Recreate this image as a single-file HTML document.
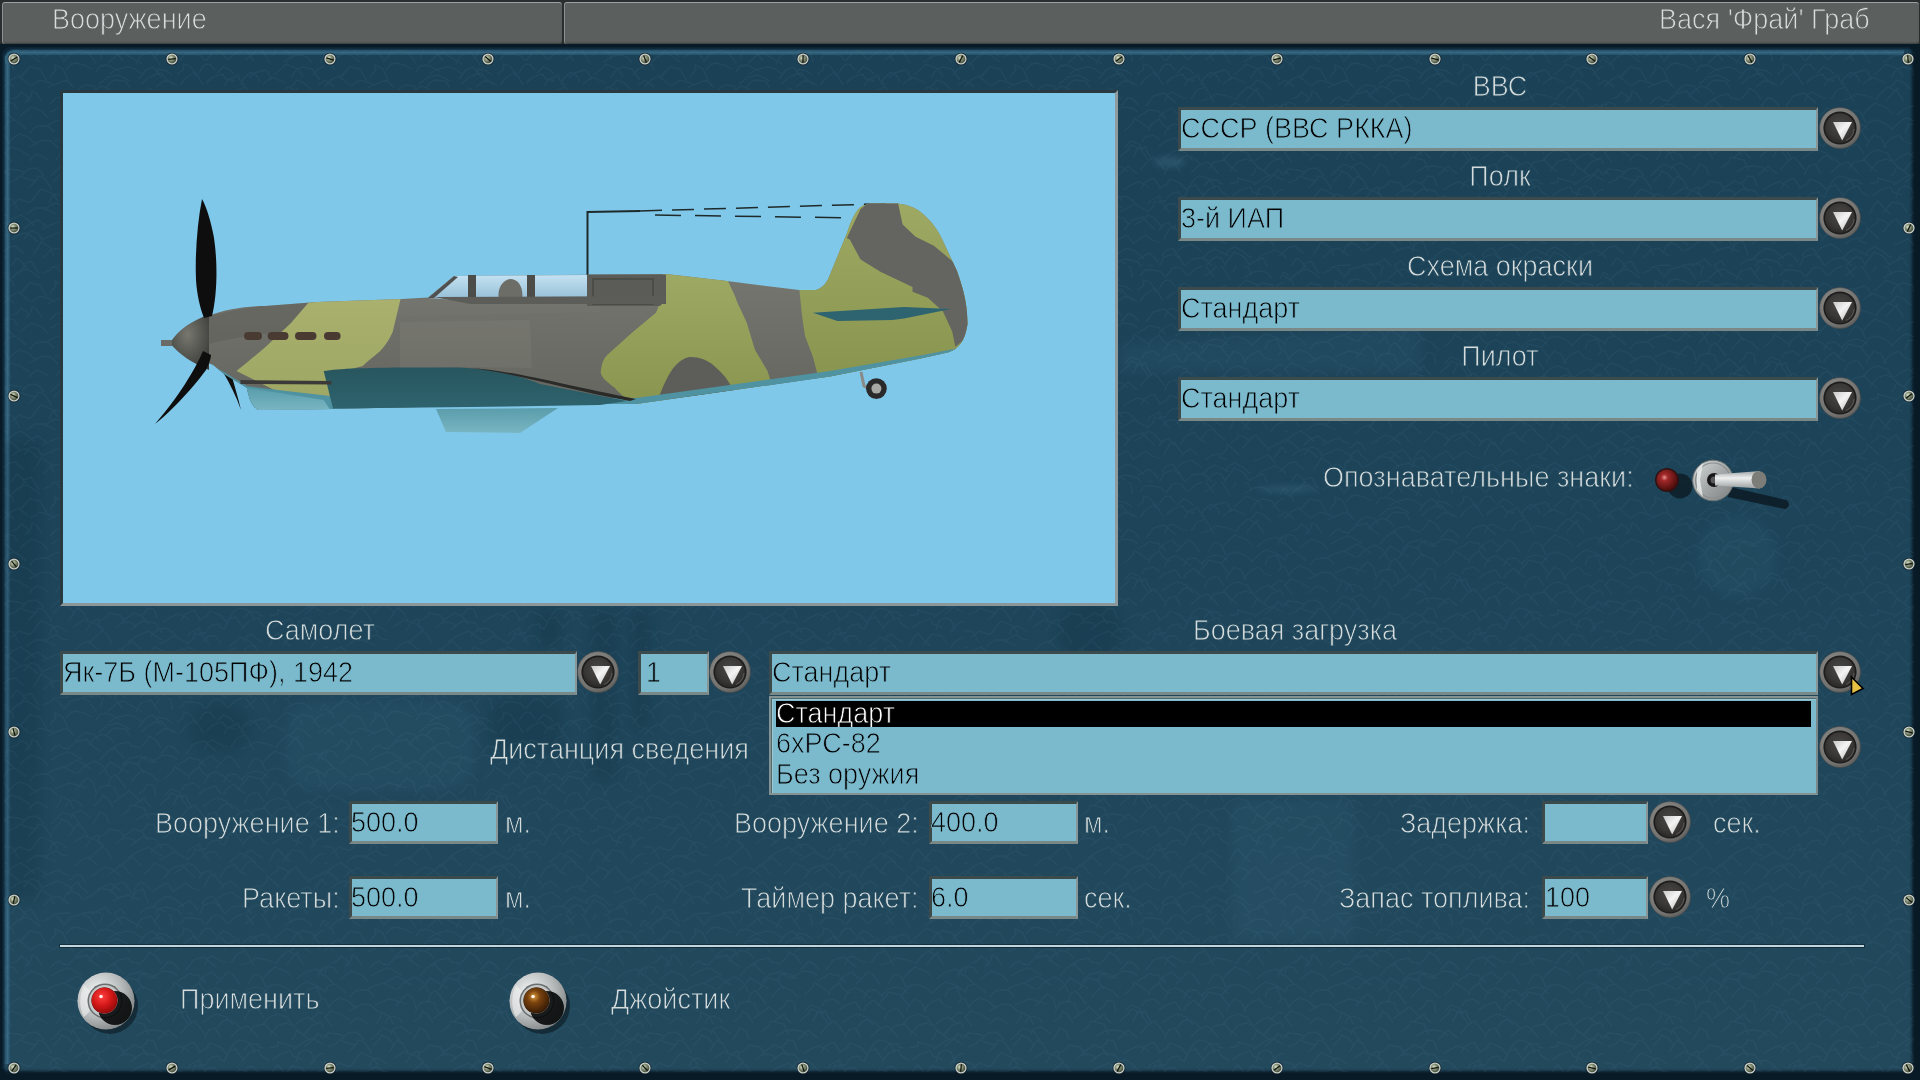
<!DOCTYPE html><html><head><meta charset='utf-8'><style>
*{margin:0;padding:0;box-sizing:border-box}
html,body{width:1920px;height:1080px;overflow:hidden;background:#1a1c1c}
body{position:relative;font-family:"Liberation Sans", sans-serif;font-size:27px}
.a{position:absolute}
svg{display:block}
.t{position:absolute;will-change:transform;white-space:pre;color:#d6dcdc;line-height:1;font-size:27px;-webkit-text-stroke:0.8px #1f475b;transform:scaleY(1.08);transform-origin:0 22.85px}
.fld{position:absolute;background:#7bbacd;border-style:solid;border-width:3px 2px 3px 3px;border-color:#3c4a4c #8a9696 #7a8888 #3c4a4c}
.ft{position:absolute;will-change:transform;white-space:pre;color:#000;line-height:1;font-size:27px;-webkit-text-stroke:0.8px #7bbacd;transform:scaleY(1.08);transform-origin:0 22.85px}
.btn{position:absolute;width:42px;height:42px}
.scr{position:absolute;width:12px;height:12px}
</style></head><body><div class="a" style="left:0;top:0;width:1920px;height:46px;background:#2a2e2e"></div>
<div class="a" style="left:2px;top:2px;width:560px;height:42px;background:#5b605e;border-top:1px solid #9aa3a1;border-left:1px solid #8a9391;border-radius:3px;box-shadow:inset 0 -2px 2px -1px #3a3e3c"></div>
<div class="a" style="left:564px;top:2px;width:1355px;height:42px;background:#5b605e;border-top:1px solid #9aa3a1;border-left:1px solid #8a9391;border-radius:3px;box-shadow:inset 0 -2px 2px -1px #3a3e3c"></div>
<div class="t" style="left:52px;top:7px;color:#d8dcdc;-webkit-text-stroke-color:#5b605e">Вооружение</div>
<div class="t" style="right:50px;top:7px;color:#d8dcdc;-webkit-text-stroke-color:#5b605e">Вася 'Фрай' Граб</div>
<div class="a" style="left:0;top:44px;width:1920px;height:1036px;background:#081a26"></div>
<div class="a" style="left:2px;top:47px;width:1913px;height:1027px;background:linear-gradient(to bottom,#1b4156 0%,#1d4459 50%,#23495d 100%);border-radius:9px;box-shadow:inset 2px 2px 2px 0 #0c2233, inset -3px -3px 3px 0 #0a1a26"></div>
<div class="a" style="left:5px;top:56px;width:5px;height:1008px;background:linear-gradient(to right,#24506a,#3a6a84,#24506a);opacity:0.9"></div>
<div class="a" style="left:14px;top:50px;width:1890px;height:5px;background:linear-gradient(to bottom,#24506a,#3a6a84,#24506a);opacity:0.9"></div>
<div class="a" style="left:5px;top:50px;width:14px;height:14px;border-top:5px solid #33637c;border-left:5px solid #33637c;border-top-left-radius:9px;opacity:0.9"></div>
<svg class="a" style="left:0;top:44px" width="1920" height="1036" viewBox="0 44 1920 1036">
<defs><filter id="gb" x="-20%" y="-20%" width="140%" height="140%"><feGaussianBlur stdDeviation="6"/></filter><filter id="gb2" x="-20%" y="-20%" width="140%" height="140%"><feGaussianBlur stdDeviation="3"/></filter></defs>
<g filter="url(#gb)" fill="#0e2a3a" opacity="0.22"><rect x="538" y="610" width="22" height="40" rx="10"/><rect x="490" y="697" width="72" height="56" rx="20"/><rect x="592" y="611" width="24" height="170" rx="10"/><rect x="632" y="611" width="18" height="120" rx="8"/><ellipse cx="220" cy="728" rx="30" ry="24"/><rect x="0" y="440" width="40" height="460"/><ellipse cx="1090" cy="632" rx="32" ry="30"/></g>
<g filter="url(#gb2)" fill="#5a8aa2" opacity="0.25"><ellipse cx="1170" cy="162" rx="16" ry="5"/><ellipse cx="1287" cy="489" rx="30" ry="3"/></g>
<g filter="url(#gb)" fill="#3f6f88" opacity="0.14"><path d="M1120 345 L1420 325 L1420 372 L1120 372 Z"/><rect x="285" y="700" width="190" height="90" rx="30"/><ellipse cx="1737" cy="557" rx="40" ry="40"/><rect x="1232" y="800" width="122" height="140" rx="10"/></g>
</svg>
<svg class="a" style="left:4px;top:50px" width="1910" height="1022"><defs><pattern id="crk" width="320" height="216" patternUnits="userSpaceOnUse"><path d="M-25 -7L-18 -13L-11 -14L-4 -14L3 -8M-7 -8L-2 -15L2 -20L13 -15L17 -9M30 -9L36 -15L43 -17L54 -15L61 -8M46 -5L52 -9L56 -12L65 -10L72 -5M65 -6L73 -13L78 -17L89 -12L96 -7M96 -8L102 -17L105 -19L114 -14L119 -7M116 -6L123 -11L131 -16L139 -13L145 -5M125 -2L131 -11L141 -15L146 -12L153 -2M149 -8L152 -16L154 -19L163 -17L166 -8M177 -0L184 -9L190 -12L201 -6L208 -2M193 -7L197 -15L204 -16L208 -13L213 -6M227 -2L232 -7L241 -12L247 -7L253 -0M240 -5L243 -13L246 -15L252 -12L258 -8M256 -7L262 -13L261 -16L268 -14L274 -8M284 -8L292 -18L299 -21L306 -17L315 -9M313 -7L316 -15L322 -20L324 -16L330 -5M-16 12L-10 7L-9 3L0 6L5 10M5 15L14 6L23 3L29 7L36 12M14 8L19 2L28 -3L32 3L35 7M40 7L46 4L50 -0L54 3L59 9M59 12L67 3L78 0L85 3L92 13M96 9L100 -1L109 -4L112 2L119 11M104 13L113 5L120 3L128 8L138 14M132 14L137 5L147 2L149 5L156 15M150 9L155 1L158 -3L166 1L169 12M176 10L181 4L188 4L196 5L201 10M202 11L208 3L213 1L218 3L223 9M224 10L231 3L241 -1L244 3L250 11M241 10L249 4L255 -2L259 2L266 13M269 6L273 -1L275 -3L284 2L288 9M280 12L289 6L297 5L303 7L308 12M316 13L320 6L325 4L329 8L335 10M-21 23L-17 16L-12 15L-7 19L-5 26M-6 22L-4 14L0 10L8 15L10 20M16 28L21 22L26 17L36 19L43 31M46 27L52 19L51 15L59 19L64 30M62 20L67 14L72 13L80 15L88 19M92 22L96 16L103 15L109 18L117 22M105 24L113 19L124 17L131 19L138 24M135 29L141 21L148 17L151 19L157 27M147 26L154 23L154 19L163 21L168 25M173 24L179 20L180 14L187 17L192 26M195 23L199 16L203 14L207 15L211 21M213 23L217 19L220 17L226 20L230 24M245 28L250 23L261 20L263 21L268 30M270 25L278 18L282 14L294 19L299 27M287 28L293 19L299 17L308 19L316 30M309 25L314 19L322 15L330 18L336 25M-19 34L-13 30L-8 26L1 30L10 37M-0 37L7 30L14 26L17 28L25 35M26 36L32 33L35 30L46 33L52 35M44 38L49 35L60 31L64 31L69 37M71 43L79 36L81 35L90 36L95 43M95 34L104 27L114 25L120 28L126 31M102 38L107 32L111 30L122 31L126 39M137 34L145 27L157 23L162 29L170 35M152 37L158 32L159 31L169 32L173 36M176 35L183 27L191 22L195 28L199 35M202 33L209 27L218 24L222 29L231 31M220 36L224 30L234 25L235 29L241 36M237 35L240 28L247 22L253 26L256 32M259 34L264 30L268 27L277 31L281 33M285 38L289 35L293 30L300 33L307 39M314 35L319 32L323 27L331 32L335 32M-29 54L-23 48L-13 45L-4 49L3 56M8 49L13 47L17 42L22 45L26 51M21 53L27 46L28 41L33 44L38 51M46 54L51 49L55 47L59 50L64 51M63 52L71 44L83 41L87 47L96 53M85 47L90 41L97 36L105 39L110 44M107 51L115 46L124 44L127 48L136 50M137 49L144 42L145 38L151 41L157 49M157 56L163 49L164 48L169 49L175 56M182 56L189 46L200 43L206 48L212 53M201 51L204 44L209 42L217 47L223 49M227 49L233 40L241 37L244 41L250 52M237 51L246 48L252 44L259 45L269 48M271 50L277 43L284 37L293 41L300 51M283 50L288 44L294 38L293 41L299 50M315 57L321 53L326 49L331 53L338 58M-17 69L-11 64L-5 60L2 62L10 70M-4 62L2 57L3 52L10 54L13 59M16 66L22 61L28 57L38 61L44 68M47 62L54 58L63 54L69 56L78 61M60 70L69 64L73 62L79 66L87 71M96 62L104 53L111 50L113 53L120 60M118 67L126 60L137 58L143 63L150 64M134 67L137 61L141 59L149 62L153 65M146 64L152 61L159 57L168 58L174 62M174 67L182 62L185 60L194 61L202 69M195 67L203 60L209 58L211 62L217 65M212 70L220 62L223 58L228 60L236 70M244 70L249 62L252 60L257 63L262 73M258 66L264 59L271 53L283 58L288 63M293 65L300 59L312 55L316 58L325 67M313 63L318 56L323 54L327 58L333 65M-29 81L-23 77L-12 74L-7 77L0 79M-1 81L4 72L10 70L17 74L22 79M26 83L31 77L38 76L44 76L50 82M44 75L52 71L60 69L63 71L72 75M73 76L82 67L91 63L99 68L105 79M95 77L102 70L106 64L116 70L125 75M115 76L120 68L125 64L133 66L140 75M127 84L135 75L138 72L148 77L155 84M160 81L169 73L170 68L179 74L186 79M184 81L188 74L195 69L199 75L206 79M200 85L205 76L212 74L219 78L227 84M220 84L223 77L231 76L233 77L239 83M238 81L244 75L252 73L259 75L264 79M258 81L265 72L273 70L282 74L289 80M288 79L298 70L303 68L313 72L321 78M301 83L304 75L313 73L314 76L317 84M-17 91L-10 87L-10 83L0 84L5 93M4 94L10 87L16 84L24 87L33 95M25 97L32 93L40 90L47 91L54 98M51 91L58 88L65 85L77 88L83 90M72 92L78 85L83 80L89 84L92 94M91 98L96 89L104 87L110 89L115 100M104 89L107 79L112 77L116 82L122 90M135 96L141 91L143 86L150 88L152 99M161 98L163 95L166 91L175 94L179 100M178 92L181 87L189 85L191 86L196 90M195 96L200 92L210 88L212 89L217 96M219 97L223 91L230 86L234 91L241 95M234 91L241 83L245 78L257 81L264 91M262 97L266 90L270 85L277 88L282 98M279 97L286 89L295 85L300 91L308 94M314 89L319 84L327 81L331 83L334 89M-21 111L-15 102L-8 100L2 104L8 112M-5 107L2 102L7 97L16 100L25 106M25 111L29 107L33 104L38 106L44 110M52 110L56 104L57 98L66 103L69 110M61 109L64 104L69 102L76 105L79 109M90 108L96 103L99 97L104 101L109 109M109 105L117 99L125 93L131 98L138 105M129 109L134 104L140 100L141 103L147 109M156 107L164 100L167 95L177 99L184 110M169 108L173 99L182 97L183 101L188 110M198 109L208 102L213 100L222 103L229 111M214 113L219 107L223 106L230 108L236 114M240 106L245 97L253 94L256 98L260 104M258 111L266 103L273 100L283 103L289 112M291 111L296 107L304 103L309 107L316 110M306 106L313 100L314 98L323 100L330 105M-23 123L-15 116L-6 115L-1 119L5 125M-6 125L3 122L4 119L14 120L22 123M18 125L24 119L32 118L36 121L40 126M47 126L55 118L59 114L70 118L77 128M67 120L70 115L77 113L81 115L87 120M89 126L93 119L96 114L102 117L105 125M117 118L125 112L127 107L140 110L145 121M132 122L141 117L150 116L158 117L164 122M154 125L160 120L164 116L168 120L174 124M176 120L184 111L190 107L194 111L201 120M200 125L205 116L212 114L212 116L217 123M227 123L234 116L244 112L248 116L255 124M245 119L250 112L261 110L264 114L273 122M266 121L273 112L282 109L289 112L297 120M288 126L291 121L293 116L301 122L305 126M300 121L307 112L317 108L319 113L327 119M-28 131L-22 122L-23 120L-14 123L-11 128M4 133L12 130L15 126L27 130L33 131M24 138L32 131L34 126L40 128L48 139M49 132L56 125L57 121L64 124L71 132M65 138L70 131L73 126L79 130L84 139M95 139L104 134L105 131L116 133L121 139M118 139L126 134L130 131L138 134L144 142M137 134L141 130L144 126L150 127L153 136M159 140L167 135L175 132L180 134L185 137M177 139L181 132L190 128L192 132L196 137M194 139L203 134L206 129L216 133L224 141M226 136L231 128L236 126L245 129L251 137M240 136L245 130L254 130L255 133L259 134M266 134L274 132L274 128L285 131L291 133M290 135L301 127L310 124L313 127L324 133M301 132L310 125L314 119L319 124L327 131M-28 155L-21 149L-17 145L-13 148L-7 153M7 155L12 152L15 149L24 152L27 152M27 152L32 145L37 139L49 144L54 151M45 153L48 147L52 144L58 146L63 150M69 145L78 139L80 138L92 142L98 147M82 149L87 141L94 137L95 143L100 149M112 146L117 141L124 140L129 141L132 146M126 148L134 142L139 139L151 141L158 151M147 154L153 148L161 146L167 149L175 157M184 154L187 150L196 146L196 151L202 151M203 148L208 143L215 142L217 146L221 147M221 146L225 137L232 135L234 139L240 146M238 147L245 139L254 136L257 141L265 147M268 146L277 140L286 137L289 142L298 145M292 148L295 139L301 136L307 138L311 148M307 150L313 142L319 139L322 143L325 152M-29 168L-21 162L-12 158L-6 163L4 166M-5 160L-2 153L1 148L9 150L15 161M23 164L31 158L41 158L43 160L52 164M40 160L48 154L53 153L58 157L64 158M71 168L77 162L85 159L90 164L94 167M84 162L91 155L98 149L103 152L108 162M117 168L122 163L129 159L131 162L138 168M124 160L133 154L145 149L151 154L158 158M156 162L165 157L171 154L176 157L184 161M183 162L189 157L191 151L199 154L205 162M199 160L203 155L206 154L211 154L217 161M225 165L233 158L236 155L245 159L252 165M239 161L244 153L248 152L253 157L259 160M265 164L271 154L274 151L279 157L286 164M279 163L284 157L288 152L298 154L303 162M306 166L312 159L322 154L327 159L333 166M-17 180L-11 177L2 173L7 176L15 183M1 177L8 169L17 165L24 170L31 176M20 179L27 173L34 170L37 172L43 177M38 179L44 176L55 172L60 176L65 177M65 182L69 180L73 176L78 178L81 185M88 178L96 172L101 169L111 173L117 178M104 177L111 172L116 167L121 170L127 177M140 176L146 171L150 165L160 169L165 174M160 180L168 170L179 167L183 172L191 180M171 175L180 169L184 165L190 168L198 177M195 180L199 175L206 172L206 175L211 180M216 179L222 170L230 166L234 172L242 177M236 175L243 165L249 163L253 168L261 174M267 177L274 172L274 169L281 171L286 176M279 182L286 173L292 169L297 175L305 184M305 182L315 177L321 174L330 176L336 181M-19 189L-12 180L-8 177L-4 181L3 187M8 190L14 185L21 183L25 184L34 192M20 189L23 185L27 181L34 183L39 191M37 190L47 186L53 183L59 185L69 191M64 197L68 188L74 184L77 189L84 195M94 193L99 189L107 185L110 188L117 193M106 195L111 187L118 184L122 187L129 197M129 194L134 186L137 184L141 186L147 192M148 194L154 190L162 185L165 187L169 193M168 194L176 189L182 185L188 190L196 193M200 189L205 179L211 176L212 179L218 187M217 191L220 187L226 183L230 186L234 189M241 194L248 189L255 188L256 191L263 194M257 189L263 183L263 178L269 183L275 189M290 195L295 193L304 189L307 192L311 197M310 192L314 186L318 181L321 185L327 189M-19 209L-13 203L-5 199L-4 201L2 208M-1 203L5 197L11 196L14 199L20 203M29 205L35 196L37 192L46 197L50 206M39 208L47 200L54 198L58 201L65 206M59 204L62 196L68 193L74 196L79 202M81 201L90 196L95 190L107 192L115 201M109 203L116 199L125 197L130 200L135 201M128 202L131 194L139 191L141 196L144 205M149 209L155 203L163 198L171 201L180 209M174 209L179 207L185 203L190 207L194 212M198 206L201 201L208 198L211 201L217 209M213 201L217 198L227 194L233 198L237 201M239 208L245 202L250 199L259 203L264 206M261 205L266 199L271 197L280 202L287 208M292 211L298 205L311 200L317 203L325 211M315 206L324 199L328 198L335 201L343 205M-29 222L-23 215L-18 212L-12 214L-6 220M6 220L9 213L13 208L19 213L24 221M18 221L20 214L27 211L29 214L36 223M45 222L53 216L64 215L68 217L74 220M73 221L79 215L91 214L95 214L103 221M83 218L91 214L101 209L105 214L112 220M105 222L112 214L117 211L121 216L127 225M136 215L143 210L149 209L157 212L162 214M149 219L155 211L162 209L174 212L180 220M173 222L179 218L187 215L191 219L195 219M195 217L200 207L210 204L216 209L221 216M220 217L228 209L238 208L242 210L251 219M243 215L248 209L253 207L257 208L262 216M261 215L266 208L270 202L279 206L286 215M282 221L287 213L299 208L302 214L308 222M310 221L317 218L324 213L328 215L333 223" fill="none" stroke="#4f7f96" stroke-width="1.3" opacity="0.11"/></pattern></defs><rect width="1910" height="1022" fill="url(#crk)"/></svg>
<div class="a" style="left:60px;top:90px;width:1058px;height:516px;background:#80c8ea;border-style:solid;border-width:3px 3px 3px 3px;border-color:#28393f #8e9a9c #8a9698 #28393f"></div>
<svg class="a" style="left:63px;top:93px" width="1052" height="510" viewBox="63 93 1052 510">
<defs>
<linearGradient id="fusg" x1="0" y1="0" x2="0" y2="1"><stop offset="0" stop-color="#7e7f77"/><stop offset="0.45" stop-color="#72736c"/><stop offset="1" stop-color="#64655f"/></linearGradient>
<linearGradient id="grg" x1="0" y1="0" x2="0" y2="1"><stop offset="0" stop-color="#9ea964"/><stop offset="1" stop-color="#89954f"/></linearGradient>
<linearGradient id="grn" x1="0" y1="0" x2="0" y2="1"><stop offset="0" stop-color="#aab06e"/><stop offset="1" stop-color="#9ea764"/></linearGradient>
<linearGradient id="wing" x1="0" y1="0" x2="0" y2="1"><stop offset="0" stop-color="#28565f"/><stop offset="1" stop-color="#2e636e"/></linearGradient>
<linearGradient id="rad" x1="0" y1="0" x2="0" y2="1"><stop offset="0" stop-color="#5a9dab"/><stop offset="1" stop-color="#79b5c2"/></linearGradient>
<linearGradient id="glass" x1="0" y1="0" x2="0" y2="1"><stop offset="0" stop-color="#c4e2f2"/><stop offset="1" stop-color="#92bcd4"/></linearGradient>
<radialGradient id="spin" cx="0.45" cy="0.35" r="0.7"><stop offset="0" stop-color="#77776f"/><stop offset="1" stop-color="#3a3b38"/></radialGradient>
<clipPath id="fclip"><path id="fpath" d="M208 316 C225 309 250 306 265 306 L317 302 L402 299 L428 297.6 L454 276 L666 274 L727 281 L799 290 L816 290 C823 288 827 282 829 277 L847 233 C851 220 856 210 862 206 L870 203.5 L898 203.5 C910 205 918 209 923 214 C932 222 938 230 942 239 L957 271 C963 288 966 300 967 313 L967.5 324 C966 333 964 339 961 343 C957 349 952 351 947.6 352.6 L923 358 L830 376.5 L636 404 L560 404 L330 409 L258 410 C252 406 249 400 247 388 L224 374 L213 365 L208 363 C204 350 204 330 208 316 Z"/></clipPath>
</defs>
<path d="M587.5 276 L587.5 212 L640 211" stroke="#1e2a2a" stroke-width="2" fill="none"/>
<path d="M640 211 L893 203.5" stroke="#1e2a2a" stroke-width="1.5" stroke-dasharray="22 10" fill="none"/>
<path d="M655 215 L858 218" stroke="#1e2a2a" stroke-width="1.5" stroke-dasharray="26 14" fill="none"/>
<path d="M223 372 C230 384 236 396 241 410 C238 397 234 384 230 370 Z" fill="#111"/>
<use href="#fpath" fill="url(#fusg)"/>
<g clip-path="url(#fclip)">
<path d="M205 318 C240 306 290 302 330 302 L330 330 C290 330 240 335 205 345 Z" fill="#55564f" opacity="0.35"/>
<path d="M400 322 L530 320 L532 368 L470 367 C430 367 405 369 400 370 Z" fill="#8a8b82" opacity="0.2"/>
<path d="M330 301 L600 296 L600 312 L330 318 Z" fill="#8a8b82" opacity="0.1"/>
<path d="M310.7 300 L401 297 C398 310 395 322 392.7 332 C388 342 384 347 379.7 351.6 C372 358 367 362 362.8 366 L340 372 L332 398 L278 392 L236.5 371 C250 360 260 352 267.7 345 L291 323 Z" fill="url(#grn)"/>
<path d="M663 272 L727 279 C732 290 735 295 737 301.7 L746.7 322.5 L755 350 L767.5 371 L772 385 L636 406 C625 398 618 392 614.7 387.8 C604 380 600 375 600.8 371 C602 362 604 358 607.8 354.4 L632.8 332 L656 312.8 C660 305 662 290 663 272 Z" fill="url(#grg)"/>
<path d="M657.8 400 C665 380 672 368 677 364 C683 358 688 357 691 357 C700 357 706 360 712 364 C719 370 723 374 726 378 L735 392 Z" fill="#5d5e59"/>
<path d="M799 286 L840 200 L980 200 L980 380 L819 380 L813 357 L805 336 L802 315.6 Z" fill="url(#grg)"/>
<path d="M846.8 238 L860.6 209 L868 203 L898 203 L902.6 224.4 L915.6 236.7 L933.9 245.8 L952.2 261 L958 268 L975 300 L975 350 L962.9 340.6 L955.3 346.7 L952.2 331.4 L943 311.5 L927.8 297.8 L912.5 291.7 L912.5 287 L880.4 271.8 L860.6 259.6 L849.9 239.7 Z" fill="#646560"/>
<path d="M205 362 L224 372 L247 386 L278 390 L330 396 L636 398 L830 371 L923 355 L975 345 L975 420 L200 420 Z" fill="#4f92a1"/>
</g>
<path d="M428 298 L454 276 L587 275 L587 301 L470 301 Z" fill="url(#glass)"/>
<path d="M587 274.5 L666 274.5 L666 300 L660 306 L587 306 Z" fill="#5b5c57"/>
<rect x="593" y="279" width="60" height="25" fill="none" stroke="#474843" stroke-width="1.5"/>
<path d="M428 298 L454 276 L458 277 L434 298 Z" fill="#505050"/>
<rect x="468" y="275" width="8" height="27" fill="#4c4c48"/><rect x="527" y="275" width="8" height="27" fill="#4c4c48"/>
<path d="M499 301 C497 292 500 281 510 279 C519 279 524 288 522 301 Z" fill="#6d6d68"/>
<path d="M434 297 L666 296 L666 304 L470 304 Z" fill="#5c5d58"/>
<path d="M323.7 371 C340 368 380 367 460 367.5 C500 370 520 376 540 384 L627 401 L600 405 L470 407 L333 408.5 Z" fill="url(#wing)"/>
<path d="M470 368 C510 372 560 388 630 401 L636 399 C560 384 510 370 470 368 Z" fill="#2a2a28"/>
<path d="M247 388 L323.7 400 L330 409.5 L258.6 410 C252 406 249.5 400 247 388 Z" fill="url(#rad)"/>
<path d="M436 409 L558 408 L520 433 L446 432 Z" fill="url(#rad)"/>
<path d="M240.4 380 L331.5 381 L331.5 384.5 L240.4 384 Z" fill="#3c3a38"/>
<path d="M812.8 312.7 L904 307 L951 309 L904 318.4 L892.5 320 L837.5 321 Z" fill="#2e6470"/>
<rect x="244" y="332" width="18" height="8" rx="4" fill="#4a3b32"/>
<rect x="267.7" y="332" width="20.80000000000001" height="8" rx="4" fill="#4a3b32"/>
<rect x="295" y="332" width="21.5" height="8" rx="4" fill="#4a3b32"/>
<rect x="324" y="332" width="16.600000000000023" height="8" rx="4" fill="#4a3b32"/>
<path d="M170 343 C178 330 192 320 209 315 L209 370 C194 364 178 354 170 343 Z" fill="url(#spin)"/>
<rect x="161" y="340" width="11" height="6" fill="#6a6a66"/>
<path d="M202 199 C197 225 195 255 196 280 C197 295 200 308 204 318 L212 316 C217 295 218 265 214 238 C211 222 207 208 202 199 Z" fill="#0e0e0e"/>
<path d="M203 351 C196 368 178 398 155 424 C168 414 190 392 206 370 C209 364 211 358 211 355 Z" fill="#0e0e0e"/>
<path d="M861 372 L864 386 L872 390" stroke="#8a8a86" stroke-width="3" fill="none"/>
<circle cx="876.4" cy="388.6" r="10.4" fill="#2a2a2a"/><circle cx="876.4" cy="388.6" r="5" fill="#a8a8a4"/>
</svg>
<svg width="0" height="0" style="position:absolute"><defs>
<radialGradient id="bring" cx="0.4" cy="0.35" r="0.7"><stop offset="0" stop-color="#8e8e8b"/><stop offset="0.8" stop-color="#727270"/><stop offset="1" stop-color="#5a5a58"/></radialGradient>
<radialGradient id="binner" cx="0.5" cy="0.4" r="0.6"><stop offset="0" stop-color="#4a4846"/><stop offset="0.7" stop-color="#393735"/><stop offset="1" stop-color="#2a2826"/></radialGradient>
<linearGradient id="btri" x1="0" y1="0" x2="1" y2="1"><stop offset="0" stop-color="#c8c8c8"/><stop offset="0.45" stop-color="#f4f4f4"/><stop offset="1" stop-color="#b8b8b8"/></linearGradient>
<radialGradient id="scrdome" cx="0.38" cy="0.38" r="0.7"><stop offset="0" stop-color="#e0e8d0"/><stop offset="0.4" stop-color="#8a9478"/><stop offset="1" stop-color="#3a4234"/></radialGradient>
<radialGradient id="redl" cx="0.38" cy="0.38" r="0.65"><stop offset="0" stop-color="#e89090"/><stop offset="0.25" stop-color="#a02828"/><stop offset="1" stop-color="#4a0c0c"/></radialGradient><linearGradient id="silver2" x1="0" y1="0" x2="1" y2="1"><stop offset="0" stop-color="#d8dcdc"/><stop offset="0.5" stop-color="#a4a8a8"/><stop offset="1" stop-color="#7c8080"/></linearGradient>
<radialGradient id="silver" cx="0.35" cy="0.35" r="0.75"><stop offset="0" stop-color="#f4f6f6"/><stop offset="0.6" stop-color="#b4b8b8"/><stop offset="1" stop-color="#7a7e7e"/></radialGradient>
<radialGradient id="redbtn" cx="0.4" cy="0.35" r="0.7"><stop offset="0" stop-color="#ff4040"/><stop offset="0.5" stop-color="#d41818"/><stop offset="1" stop-color="#8a0808"/></radialGradient>
<radialGradient id="ambbtn" cx="0.4" cy="0.35" r="0.7"><stop offset="0" stop-color="#d89838"/><stop offset="0.35" stop-color="#7a420e"/><stop offset="1" stop-color="#2e1604"/></radialGradient>
<linearGradient id="lever" x1="0" y1="0" x2="0" y2="1"><stop offset="0" stop-color="#a0a4a4"/><stop offset="0.4" stop-color="#eef0f0"/><stop offset="1" stop-color="#9a9e9e"/></linearGradient>
</defs></svg>
<div class="t" style="left:1180px;width:640px;text-align:center;top:74px">ВВС</div>
<div class="fld" style="left:1178px;top:107px;width:640px;height:44px;"></div><div class="ft" style="left:1181px;top:115.5px">СССР (ВВС РККА)</div>
<svg class="a" style="left:1819px;top:107px" width="42" height="42" viewBox="0 0 42 42"><circle cx="21" cy="21" r="20.5" fill="url(#bring)" stroke="#4a4a48" stroke-width="0.6"/><circle cx="21" cy="21" r="16.6" fill="#1e1c1a"/><circle cx="21" cy="21.3" r="15" fill="url(#binner)"/><path d="M35 22 A14 14 0 0 1 27 33.5" stroke="#6a6866" stroke-width="1.3" fill="none" opacity="0.6"/><path d="M14 15 L33 15 L23.2 33.5 Z" fill="url(#btri)"/></svg>
<div class="t" style="left:1180px;width:640px;text-align:center;top:164px">Полк</div>
<div class="fld" style="left:1178px;top:197px;width:640px;height:44px;"></div><div class="ft" style="left:1181px;top:205.5px">3-й ИАП</div>
<svg class="a" style="left:1819px;top:197px" width="42" height="42" viewBox="0 0 42 42"><circle cx="21" cy="21" r="20.5" fill="url(#bring)" stroke="#4a4a48" stroke-width="0.6"/><circle cx="21" cy="21" r="16.6" fill="#1e1c1a"/><circle cx="21" cy="21.3" r="15" fill="url(#binner)"/><path d="M35 22 A14 14 0 0 1 27 33.5" stroke="#6a6866" stroke-width="1.3" fill="none" opacity="0.6"/><path d="M14 15 L33 15 L23.2 33.5 Z" fill="url(#btri)"/></svg>
<div class="t" style="left:1180px;width:640px;text-align:center;top:254px">Схема окраски</div>
<div class="fld" style="left:1178px;top:287px;width:640px;height:44px;"></div><div class="ft" style="left:1181px;top:295.5px">Стандарт</div>
<svg class="a" style="left:1819px;top:287px" width="42" height="42" viewBox="0 0 42 42"><circle cx="21" cy="21" r="20.5" fill="url(#bring)" stroke="#4a4a48" stroke-width="0.6"/><circle cx="21" cy="21" r="16.6" fill="#1e1c1a"/><circle cx="21" cy="21.3" r="15" fill="url(#binner)"/><path d="M35 22 A14 14 0 0 1 27 33.5" stroke="#6a6866" stroke-width="1.3" fill="none" opacity="0.6"/><path d="M14 15 L33 15 L23.2 33.5 Z" fill="url(#btri)"/></svg>
<div class="t" style="left:1180px;width:640px;text-align:center;top:344px">Пилот</div>
<div class="fld" style="left:1178px;top:377px;width:640px;height:44px;"></div><div class="ft" style="left:1181px;top:385.5px">Стандарт</div>
<svg class="a" style="left:1819px;top:377px" width="42" height="42" viewBox="0 0 42 42"><circle cx="21" cy="21" r="20.5" fill="url(#bring)" stroke="#4a4a48" stroke-width="0.6"/><circle cx="21" cy="21" r="16.6" fill="#1e1c1a"/><circle cx="21" cy="21.3" r="15" fill="url(#binner)"/><path d="M35 22 A14 14 0 0 1 27 33.5" stroke="#6a6866" stroke-width="1.3" fill="none" opacity="0.6"/><path d="M14 15 L33 15 L23.2 33.5 Z" fill="url(#btri)"/></svg>
<div class="t" style="left:1323px;top:465px">Опознавательные знаки:</div>
<div class="t" style="left:60px;width:520px;text-align:center;top:618px">Самолет</div>
<div class="t" style="left:770px;width:1050px;text-align:center;top:618px">Боевая загрузка</div>
<div class="fld" style="left:60px;top:651px;width:517px;height:44px;"></div><div class="ft" style="left:63px;top:659.5px">Як-7Б (М-105ПФ), 1942</div>
<svg class="a" style="left:577px;top:651px" width="42" height="42" viewBox="0 0 42 42"><circle cx="21" cy="21" r="20.5" fill="url(#bring)" stroke="#4a4a48" stroke-width="0.6"/><circle cx="21" cy="21" r="16.6" fill="#1e1c1a"/><circle cx="21" cy="21.3" r="15" fill="url(#binner)"/><path d="M35 22 A14 14 0 0 1 27 33.5" stroke="#6a6866" stroke-width="1.3" fill="none" opacity="0.6"/><path d="M14 15 L33 15 L23.2 33.5 Z" fill="url(#btri)"/></svg>
<div class="fld" style="left:638px;top:651px;width:71px;height:44px;"></div><div class="ft" style="left:646px;top:659.5px">1</div>
<svg class="a" style="left:709px;top:651px" width="42" height="42" viewBox="0 0 42 42"><circle cx="21" cy="21" r="20.5" fill="url(#bring)" stroke="#4a4a48" stroke-width="0.6"/><circle cx="21" cy="21" r="16.6" fill="#1e1c1a"/><circle cx="21" cy="21.3" r="15" fill="url(#binner)"/><path d="M35 22 A14 14 0 0 1 27 33.5" stroke="#6a6866" stroke-width="1.3" fill="none" opacity="0.6"/><path d="M14 15 L33 15 L23.2 33.5 Z" fill="url(#btri)"/></svg>
<div class="fld" style="left:769px;top:651px;width:1049px;height:44px;"></div><div class="ft" style="left:772px;top:659.5px">Стандарт</div>
<svg class="a" style="left:1819px;top:651px" width="42" height="42" viewBox="0 0 42 42"><circle cx="21" cy="21" r="20.5" fill="url(#bring)" stroke="#4a4a48" stroke-width="0.6"/><circle cx="21" cy="21" r="16.6" fill="#1e1c1a"/><circle cx="21" cy="21.3" r="15" fill="url(#binner)"/><path d="M35 22 A14 14 0 0 1 27 33.5" stroke="#6a6866" stroke-width="1.3" fill="none" opacity="0.6"/><path d="M14 15 L33 15 L23.2 33.5 Z" fill="url(#btri)"/></svg>
<div class="a" style="left:769px;top:696px;width:1049px;height:99px;background:#7bbacd;border:2px solid #849292;border-right-color:#7a8888;box-shadow:inset 1px 1px 0 #4a6a70, inset 2px 2px 0 #a0c8d0"></div>
<div class="a" style="left:776px;top:701px;width:1035px;height:26px;background:#000;overflow:hidden"><div class="ft" style="left:0;top:-0.5px;color:#fff;-webkit-text-stroke-color:#000">Стандарт</div></div>
<div class="ft" style="left:776px;top:731px">6xРС-82</div>
<div class="ft" style="left:776px;top:762px">Без оружия</div>
<svg class="a" style="left:1819px;top:726px" width="42" height="42" viewBox="0 0 42 42"><circle cx="21" cy="21" r="20.5" fill="url(#bring)" stroke="#4a4a48" stroke-width="0.6"/><circle cx="21" cy="21" r="16.6" fill="#1e1c1a"/><circle cx="21" cy="21.3" r="15" fill="url(#binner)"/><path d="M35 22 A14 14 0 0 1 27 33.5" stroke="#6a6866" stroke-width="1.3" fill="none" opacity="0.6"/><path d="M14 15 L33 15 L23.2 33.5 Z" fill="url(#btri)"/></svg>
<div class="t" style="right:1171px;top:737px">Дистанция сведения</div>
<div class="t" style="right:1580px;top:811px">Вооружение 1:</div>
<div class="fld" style="left:349px;top:801px;width:149px;height:43px;"></div><div class="ft" style="left:351px;top:809.5px">500.0</div>
<div class="t" style="left:505px;top:811px">м.</div>
<div class="t" style="right:1001px;top:811px">Вооружение 2:</div>
<div class="fld" style="left:929px;top:801px;width:149px;height:43px;"></div><div class="ft" style="left:931px;top:809.5px">400.0</div>
<div class="t" style="left:1084px;top:811px">м.</div>
<div class="t" style="right:390px;top:811px">Задержка:</div>
<div class="fld" style="left:1542px;top:801px;width:106px;height:43px;"></div>
<svg class="a" style="left:1649px;top:801px" width="42" height="42" viewBox="0 0 42 42"><circle cx="21" cy="21" r="20.5" fill="url(#bring)" stroke="#4a4a48" stroke-width="0.6"/><circle cx="21" cy="21" r="16.6" fill="#1e1c1a"/><circle cx="21" cy="21.3" r="15" fill="url(#binner)"/><path d="M35 22 A14 14 0 0 1 27 33.5" stroke="#6a6866" stroke-width="1.3" fill="none" opacity="0.6"/><path d="M14 15 L33 15 L23.2 33.5 Z" fill="url(#btri)"/></svg>
<div class="t" style="left:1713px;top:811px">сек.</div>
<div class="t" style="right:1580px;top:886px">Ракеты:</div>
<div class="fld" style="left:349px;top:876px;width:149px;height:43px;"></div><div class="ft" style="left:351px;top:884.5px">500.0</div>
<div class="t" style="left:505px;top:886px">м.</div>
<div class="t" style="right:1001px;top:886px">Таймер ракет:</div>
<div class="fld" style="left:929px;top:876px;width:149px;height:43px;"></div><div class="ft" style="left:931px;top:884.5px">6.0</div>
<div class="t" style="left:1084px;top:886px">сек.</div>
<div class="t" style="right:390px;top:886px">Запас топлива:</div>
<div class="fld" style="left:1542px;top:876px;width:106px;height:43px;"></div><div class="ft" style="left:1545px;top:884.5px">100</div>
<svg class="a" style="left:1649px;top:876px" width="42" height="42" viewBox="0 0 42 42"><circle cx="21" cy="21" r="20.5" fill="url(#bring)" stroke="#4a4a48" stroke-width="0.6"/><circle cx="21" cy="21" r="16.6" fill="#1e1c1a"/><circle cx="21" cy="21.3" r="15" fill="url(#binner)"/><path d="M35 22 A14 14 0 0 1 27 33.5" stroke="#6a6866" stroke-width="1.3" fill="none" opacity="0.6"/><path d="M14 15 L33 15 L23.2 33.5 Z" fill="url(#btri)"/></svg>
<div class="t" style="left:1706px;top:886px">%</div>
<div class="a" style="left:60px;top:945px;width:1804px;height:2px;background:#c2d4dc;box-shadow:0 0 0 1px rgba(10,30,40,0.6)"></div>
<svg class="a" style="left:7.0px;top:52.3px" width="14" height="14" viewBox="0 0 14 14"><circle cx="7" cy="7" r="6.3" fill="#0a161e" opacity="0.85"/><circle cx="7" cy="7" r="5.6" fill="#c8d0cc"/><circle cx="7" cy="7" r="4.3" fill="url(#scrdome)"/><path d="M3.2 7 L10.8 7" stroke="#10140e" stroke-width="1.3" transform="rotate(148 7 7)"/></svg>
<svg class="a" style="left:7.0px;top:1061.3px" width="14" height="14" viewBox="0 0 14 14"><circle cx="7" cy="7" r="6.3" fill="#0a161e" opacity="0.85"/><circle cx="7" cy="7" r="5.6" fill="#c8d0cc"/><circle cx="7" cy="7" r="4.3" fill="url(#scrdome)"/><path d="M3.2 7 L10.8 7" stroke="#10140e" stroke-width="1.3" transform="rotate(126 7 7)"/></svg>
<svg class="a" style="left:164.8px;top:52.3px" width="14" height="14" viewBox="0 0 14 14"><circle cx="7" cy="7" r="6.3" fill="#0a161e" opacity="0.85"/><circle cx="7" cy="7" r="5.6" fill="#c8d0cc"/><circle cx="7" cy="7" r="4.3" fill="url(#scrdome)"/><path d="M3.2 7 L10.8 7" stroke="#10140e" stroke-width="1.3" transform="rotate(173 7 7)"/></svg>
<svg class="a" style="left:164.8px;top:1061.3px" width="14" height="14" viewBox="0 0 14 14"><circle cx="7" cy="7" r="6.3" fill="#0a161e" opacity="0.85"/><circle cx="7" cy="7" r="5.6" fill="#c8d0cc"/><circle cx="7" cy="7" r="4.3" fill="url(#scrdome)"/><path d="M3.2 7 L10.8 7" stroke="#10140e" stroke-width="1.3" transform="rotate(150 7 7)"/></svg>
<svg class="a" style="left:322.7px;top:52.3px" width="14" height="14" viewBox="0 0 14 14"><circle cx="7" cy="7" r="6.3" fill="#0a161e" opacity="0.85"/><circle cx="7" cy="7" r="5.6" fill="#c8d0cc"/><circle cx="7" cy="7" r="4.3" fill="url(#scrdome)"/><path d="M3.2 7 L10.8 7" stroke="#10140e" stroke-width="1.3" transform="rotate(18 7 7)"/></svg>
<svg class="a" style="left:322.7px;top:1061.3px" width="14" height="14" viewBox="0 0 14 14"><circle cx="7" cy="7" r="6.3" fill="#0a161e" opacity="0.85"/><circle cx="7" cy="7" r="5.6" fill="#c8d0cc"/><circle cx="7" cy="7" r="4.3" fill="url(#scrdome)"/><path d="M3.2 7 L10.8 7" stroke="#10140e" stroke-width="1.3" transform="rotate(175 7 7)"/></svg>
<svg class="a" style="left:480.5px;top:52.3px" width="14" height="14" viewBox="0 0 14 14"><circle cx="7" cy="7" r="6.3" fill="#0a161e" opacity="0.85"/><circle cx="7" cy="7" r="5.6" fill="#c8d0cc"/><circle cx="7" cy="7" r="4.3" fill="url(#scrdome)"/><path d="M3.2 7 L10.8 7" stroke="#10140e" stroke-width="1.3" transform="rotate(43 7 7)"/></svg>
<svg class="a" style="left:480.5px;top:1061.3px" width="14" height="14" viewBox="0 0 14 14"><circle cx="7" cy="7" r="6.3" fill="#0a161e" opacity="0.85"/><circle cx="7" cy="7" r="5.6" fill="#c8d0cc"/><circle cx="7" cy="7" r="4.3" fill="url(#scrdome)"/><path d="M3.2 7 L10.8 7" stroke="#10140e" stroke-width="1.3" transform="rotate(20 7 7)"/></svg>
<svg class="a" style="left:638.3px;top:52.3px" width="14" height="14" viewBox="0 0 14 14"><circle cx="7" cy="7" r="6.3" fill="#0a161e" opacity="0.85"/><circle cx="7" cy="7" r="5.6" fill="#c8d0cc"/><circle cx="7" cy="7" r="4.3" fill="url(#scrdome)"/><path d="M3.2 7 L10.8 7" stroke="#10140e" stroke-width="1.3" transform="rotate(68 7 7)"/></svg>
<svg class="a" style="left:638.3px;top:1061.3px" width="14" height="14" viewBox="0 0 14 14"><circle cx="7" cy="7" r="6.3" fill="#0a161e" opacity="0.85"/><circle cx="7" cy="7" r="5.6" fill="#c8d0cc"/><circle cx="7" cy="7" r="4.3" fill="url(#scrdome)"/><path d="M3.2 7 L10.8 7" stroke="#10140e" stroke-width="1.3" transform="rotate(45 7 7)"/></svg>
<svg class="a" style="left:796.2px;top:52.3px" width="14" height="14" viewBox="0 0 14 14"><circle cx="7" cy="7" r="6.3" fill="#0a161e" opacity="0.85"/><circle cx="7" cy="7" r="5.6" fill="#c8d0cc"/><circle cx="7" cy="7" r="4.3" fill="url(#scrdome)"/><path d="M3.2 7 L10.8 7" stroke="#10140e" stroke-width="1.3" transform="rotate(92 7 7)"/></svg>
<svg class="a" style="left:796.2px;top:1061.3px" width="14" height="14" viewBox="0 0 14 14"><circle cx="7" cy="7" r="6.3" fill="#0a161e" opacity="0.85"/><circle cx="7" cy="7" r="5.6" fill="#c8d0cc"/><circle cx="7" cy="7" r="4.3" fill="url(#scrdome)"/><path d="M3.2 7 L10.8 7" stroke="#10140e" stroke-width="1.3" transform="rotate(70 7 7)"/></svg>
<svg class="a" style="left:954.0px;top:52.3px" width="14" height="14" viewBox="0 0 14 14"><circle cx="7" cy="7" r="6.3" fill="#0a161e" opacity="0.85"/><circle cx="7" cy="7" r="5.6" fill="#c8d0cc"/><circle cx="7" cy="7" r="4.3" fill="url(#scrdome)"/><path d="M3.2 7 L10.8 7" stroke="#10140e" stroke-width="1.3" transform="rotate(117 7 7)"/></svg>
<svg class="a" style="left:954.0px;top:1061.3px" width="14" height="14" viewBox="0 0 14 14"><circle cx="7" cy="7" r="6.3" fill="#0a161e" opacity="0.85"/><circle cx="7" cy="7" r="5.6" fill="#c8d0cc"/><circle cx="7" cy="7" r="4.3" fill="url(#scrdome)"/><path d="M3.2 7 L10.8 7" stroke="#10140e" stroke-width="1.3" transform="rotate(95 7 7)"/></svg>
<svg class="a" style="left:1111.8px;top:52.3px" width="14" height="14" viewBox="0 0 14 14"><circle cx="7" cy="7" r="6.3" fill="#0a161e" opacity="0.85"/><circle cx="7" cy="7" r="5.6" fill="#c8d0cc"/><circle cx="7" cy="7" r="4.3" fill="url(#scrdome)"/><path d="M3.2 7 L10.8 7" stroke="#10140e" stroke-width="1.3" transform="rotate(142 7 7)"/></svg>
<svg class="a" style="left:1111.8px;top:1061.3px" width="14" height="14" viewBox="0 0 14 14"><circle cx="7" cy="7" r="6.3" fill="#0a161e" opacity="0.85"/><circle cx="7" cy="7" r="5.6" fill="#c8d0cc"/><circle cx="7" cy="7" r="4.3" fill="url(#scrdome)"/><path d="M3.2 7 L10.8 7" stroke="#10140e" stroke-width="1.3" transform="rotate(119 7 7)"/></svg>
<svg class="a" style="left:1269.6px;top:52.3px" width="14" height="14" viewBox="0 0 14 14"><circle cx="7" cy="7" r="6.3" fill="#0a161e" opacity="0.85"/><circle cx="7" cy="7" r="5.6" fill="#c8d0cc"/><circle cx="7" cy="7" r="4.3" fill="url(#scrdome)"/><path d="M3.2 7 L10.8 7" stroke="#10140e" stroke-width="1.3" transform="rotate(167 7 7)"/></svg>
<svg class="a" style="left:1269.6px;top:1061.3px" width="14" height="14" viewBox="0 0 14 14"><circle cx="7" cy="7" r="6.3" fill="#0a161e" opacity="0.85"/><circle cx="7" cy="7" r="5.6" fill="#c8d0cc"/><circle cx="7" cy="7" r="4.3" fill="url(#scrdome)"/><path d="M3.2 7 L10.8 7" stroke="#10140e" stroke-width="1.3" transform="rotate(144 7 7)"/></svg>
<svg class="a" style="left:1427.5px;top:52.3px" width="14" height="14" viewBox="0 0 14 14"><circle cx="7" cy="7" r="6.3" fill="#0a161e" opacity="0.85"/><circle cx="7" cy="7" r="5.6" fill="#c8d0cc"/><circle cx="7" cy="7" r="4.3" fill="url(#scrdome)"/><path d="M3.2 7 L10.8 7" stroke="#10140e" stroke-width="1.3" transform="rotate(12 7 7)"/></svg>
<svg class="a" style="left:1427.5px;top:1061.3px" width="14" height="14" viewBox="0 0 14 14"><circle cx="7" cy="7" r="6.3" fill="#0a161e" opacity="0.85"/><circle cx="7" cy="7" r="5.6" fill="#c8d0cc"/><circle cx="7" cy="7" r="4.3" fill="url(#scrdome)"/><path d="M3.2 7 L10.8 7" stroke="#10140e" stroke-width="1.3" transform="rotate(169 7 7)"/></svg>
<svg class="a" style="left:1585.3px;top:52.3px" width="14" height="14" viewBox="0 0 14 14"><circle cx="7" cy="7" r="6.3" fill="#0a161e" opacity="0.85"/><circle cx="7" cy="7" r="5.6" fill="#c8d0cc"/><circle cx="7" cy="7" r="4.3" fill="url(#scrdome)"/><path d="M3.2 7 L10.8 7" stroke="#10140e" stroke-width="1.3" transform="rotate(37 7 7)"/></svg>
<svg class="a" style="left:1585.3px;top:1061.3px" width="14" height="14" viewBox="0 0 14 14"><circle cx="7" cy="7" r="6.3" fill="#0a161e" opacity="0.85"/><circle cx="7" cy="7" r="5.6" fill="#c8d0cc"/><circle cx="7" cy="7" r="4.3" fill="url(#scrdome)"/><path d="M3.2 7 L10.8 7" stroke="#10140e" stroke-width="1.3" transform="rotate(14 7 7)"/></svg>
<svg class="a" style="left:1743.1px;top:52.3px" width="14" height="14" viewBox="0 0 14 14"><circle cx="7" cy="7" r="6.3" fill="#0a161e" opacity="0.85"/><circle cx="7" cy="7" r="5.6" fill="#c8d0cc"/><circle cx="7" cy="7" r="4.3" fill="url(#scrdome)"/><path d="M3.2 7 L10.8 7" stroke="#10140e" stroke-width="1.3" transform="rotate(61 7 7)"/></svg>
<svg class="a" style="left:1743.1px;top:1061.3px" width="14" height="14" viewBox="0 0 14 14"><circle cx="7" cy="7" r="6.3" fill="#0a161e" opacity="0.85"/><circle cx="7" cy="7" r="5.6" fill="#c8d0cc"/><circle cx="7" cy="7" r="4.3" fill="url(#scrdome)"/><path d="M3.2 7 L10.8 7" stroke="#10140e" stroke-width="1.3" transform="rotate(39 7 7)"/></svg>
<svg class="a" style="left:1901.0px;top:52.3px" width="14" height="14" viewBox="0 0 14 14"><circle cx="7" cy="7" r="6.3" fill="#0a161e" opacity="0.85"/><circle cx="7" cy="7" r="5.6" fill="#c8d0cc"/><circle cx="7" cy="7" r="4.3" fill="url(#scrdome)"/><path d="M3.2 7 L10.8 7" stroke="#10140e" stroke-width="1.3" transform="rotate(86 7 7)"/></svg>
<svg class="a" style="left:1901.0px;top:1061.3px" width="14" height="14" viewBox="0 0 14 14"><circle cx="7" cy="7" r="6.3" fill="#0a161e" opacity="0.85"/><circle cx="7" cy="7" r="5.6" fill="#c8d0cc"/><circle cx="7" cy="7" r="4.3" fill="url(#scrdome)"/><path d="M3.2 7 L10.8 7" stroke="#10140e" stroke-width="1.3" transform="rotate(63 7 7)"/></svg>
<svg class="a" style="left:7.4px;top:220.5px" width="14" height="14" viewBox="0 0 14 14"><circle cx="7" cy="7" r="6.3" fill="#0a161e" opacity="0.85"/><circle cx="7" cy="7" r="5.6" fill="#c8d0cc"/><circle cx="7" cy="7" r="4.3" fill="url(#scrdome)"/><path d="M3.2 7 L10.8 7" stroke="#10140e" stroke-width="1.3" transform="rotate(177 7 7)"/></svg>
<svg class="a" style="left:1901.5px;top:220.5px" width="14" height="14" viewBox="0 0 14 14"><circle cx="7" cy="7" r="6.3" fill="#0a161e" opacity="0.85"/><circle cx="7" cy="7" r="5.6" fill="#c8d0cc"/><circle cx="7" cy="7" r="4.3" fill="url(#scrdome)"/><path d="M3.2 7 L10.8 7" stroke="#10140e" stroke-width="1.3" transform="rotate(116 7 7)"/></svg>
<svg class="a" style="left:7.4px;top:388.6px" width="14" height="14" viewBox="0 0 14 14"><circle cx="7" cy="7" r="6.3" fill="#0a161e" opacity="0.85"/><circle cx="7" cy="7" r="5.6" fill="#c8d0cc"/><circle cx="7" cy="7" r="4.3" fill="url(#scrdome)"/><path d="M3.2 7 L10.8 7" stroke="#10140e" stroke-width="1.3" transform="rotate(24 7 7)"/></svg>
<svg class="a" style="left:1901.5px;top:388.6px" width="14" height="14" viewBox="0 0 14 14"><circle cx="7" cy="7" r="6.3" fill="#0a161e" opacity="0.85"/><circle cx="7" cy="7" r="5.6" fill="#c8d0cc"/><circle cx="7" cy="7" r="4.3" fill="url(#scrdome)"/><path d="M3.2 7 L10.8 7" stroke="#10140e" stroke-width="1.3" transform="rotate(142 7 7)"/></svg>
<svg class="a" style="left:7.4px;top:556.8px" width="14" height="14" viewBox="0 0 14 14"><circle cx="7" cy="7" r="6.3" fill="#0a161e" opacity="0.85"/><circle cx="7" cy="7" r="5.6" fill="#c8d0cc"/><circle cx="7" cy="7" r="4.3" fill="url(#scrdome)"/><path d="M3.2 7 L10.8 7" stroke="#10140e" stroke-width="1.3" transform="rotate(50 7 7)"/></svg>
<svg class="a" style="left:1901.5px;top:556.8px" width="14" height="14" viewBox="0 0 14 14"><circle cx="7" cy="7" r="6.3" fill="#0a161e" opacity="0.85"/><circle cx="7" cy="7" r="5.6" fill="#c8d0cc"/><circle cx="7" cy="7" r="4.3" fill="url(#scrdome)"/><path d="M3.2 7 L10.8 7" stroke="#10140e" stroke-width="1.3" transform="rotate(169 7 7)"/></svg>
<svg class="a" style="left:7.4px;top:725.0px" width="14" height="14" viewBox="0 0 14 14"><circle cx="7" cy="7" r="6.3" fill="#0a161e" opacity="0.85"/><circle cx="7" cy="7" r="5.6" fill="#c8d0cc"/><circle cx="7" cy="7" r="4.3" fill="url(#scrdome)"/><path d="M3.2 7 L10.8 7" stroke="#10140e" stroke-width="1.3" transform="rotate(76 7 7)"/></svg>
<svg class="a" style="left:1901.5px;top:725.0px" width="14" height="14" viewBox="0 0 14 14"><circle cx="7" cy="7" r="6.3" fill="#0a161e" opacity="0.85"/><circle cx="7" cy="7" r="5.6" fill="#c8d0cc"/><circle cx="7" cy="7" r="4.3" fill="url(#scrdome)"/><path d="M3.2 7 L10.8 7" stroke="#10140e" stroke-width="1.3" transform="rotate(15 7 7)"/></svg>
<svg class="a" style="left:7.4px;top:893.1px" width="14" height="14" viewBox="0 0 14 14"><circle cx="7" cy="7" r="6.3" fill="#0a161e" opacity="0.85"/><circle cx="7" cy="7" r="5.6" fill="#c8d0cc"/><circle cx="7" cy="7" r="4.3" fill="url(#scrdome)"/><path d="M3.2 7 L10.8 7" stroke="#10140e" stroke-width="1.3" transform="rotate(102 7 7)"/></svg>
<svg class="a" style="left:1901.5px;top:893.1px" width="14" height="14" viewBox="0 0 14 14"><circle cx="7" cy="7" r="6.3" fill="#0a161e" opacity="0.85"/><circle cx="7" cy="7" r="5.6" fill="#c8d0cc"/><circle cx="7" cy="7" r="4.3" fill="url(#scrdome)"/><path d="M3.2 7 L10.8 7" stroke="#10140e" stroke-width="1.3" transform="rotate(41 7 7)"/></svg>
<svg class="a" style="left:1640px;top:450px" width="160" height="70" viewBox="1640 450 160 70"><circle cx="1680" cy="486" r="12.5" fill="#0a1820" opacity="0.75"/><circle cx="1667" cy="480" r="12" fill="#301212"/><circle cx="1667" cy="480" r="10.5" fill="url(#redl)"/><path d="M1730 487 L1786 500 C1790 502 1790 508 1785 509 L1728 497 Z" fill="#0a1820" opacity="0.8"/><circle cx="1713" cy="480.5" r="20.3" fill="url(#silver2)" stroke="#6e7272" stroke-width="1"/><circle cx="1713" cy="480.5" r="17.5" fill="none" stroke="#8a8e8e" stroke-width="1.2"/><path d="M1697 470 L1703 463 L1700 480 L1703 497 L1697 490 Z" fill="#eceeee" opacity="0.8"/><circle cx="1714" cy="480" r="7" fill="#161616"/><circle cx="1714" cy="480" r="3.5" fill="#5a5a5a"/><path d="M1715 474.5 L1760 471 L1760 488.5 L1715 485.5 Z" fill="url(#lever)"/><ellipse cx="1759" cy="479.7" rx="7.5" ry="8.8" fill="#7c7c78"/></svg>
<svg class="a" style="left:72px;top:967px" width="68" height="68" viewBox="-34 -34 68 68"><defs><clipPath id="c106"><circle cx="0" cy="0" r="28.5"/></clipPath></defs><circle cx="4" cy="5" r="28" fill="#08141a" opacity="0.55"/><path d="M-14 -25 L14 -25 L28.5 0 L14 25 L-14 25 L-28.5 0 Z" fill="url(#silver)"/><circle cx="0" cy="0" r="28.5" fill="url(#silver)"/><path d="M-22 -16 C-27 -6 -27 8 -22 16 L-16 10 C-19 4 -19 -4 -16 -10 Z" fill="#f0f2f2" opacity="0.6"/><circle cx="-1" cy="0" r="17.5" fill="#6a6e6e"/><circle cx="-1" cy="0" r="16" fill="#c4c8c8"/><g clip-path="url(#c106)"><path fill-rule="evenodd" d="M26 7 A17 17 0 1 1 -8 7 A17 17 0 1 1 26 7 Z M11.5 -0.5 A13 13 0 1 0 -14.5 -0.5 A13 13 0 1 0 11.5 -0.5 Z" fill="#050808" opacity="0.9"/></g><circle cx="-1.5" cy="-0.5" r="13" fill="url(#redbtn)"/><circle cx="-5" cy="-4.5" r="1.8" fill="#fff" opacity="0.9"/></svg>
<svg class="a" style="left:504px;top:967px" width="68" height="68" viewBox="-34 -34 68 68"><defs><clipPath id="c538"><circle cx="0" cy="0" r="28.5"/></clipPath></defs><circle cx="4" cy="5" r="28" fill="#08141a" opacity="0.55"/><path d="M-14 -25 L14 -25 L28.5 0 L14 25 L-14 25 L-28.5 0 Z" fill="url(#silver)"/><circle cx="0" cy="0" r="28.5" fill="url(#silver)"/><path d="M-22 -16 C-27 -6 -27 8 -22 16 L-16 10 C-19 4 -19 -4 -16 -10 Z" fill="#f0f2f2" opacity="0.6"/><circle cx="-1" cy="0" r="17.5" fill="#6a6e6e"/><circle cx="-1" cy="0" r="16" fill="#c4c8c8"/><g clip-path="url(#c538)"><path fill-rule="evenodd" d="M26 7 A17 17 0 1 1 -8 7 A17 17 0 1 1 26 7 Z M11.5 -0.5 A13 13 0 1 0 -14.5 -0.5 A13 13 0 1 0 11.5 -0.5 Z" fill="#050808" opacity="0.9"/></g><circle cx="-1.5" cy="-0.5" r="13" fill="url(#ambbtn)"/><circle cx="-5" cy="-4.5" r="1.8" fill="#fff" opacity="0.9"/></svg>
<svg class="a" style="left:1848px;top:674px" width="18" height="24" viewBox="1848 674 18 24"><path d="M1851.5 677 L1863 688.5 L1851.5 694.5 Z" fill="#e6c043" stroke="#000" stroke-width="1.6" stroke-linejoin="miter"/></svg>
<div class="t" style="left:180px;top:987px">Применить</div>
<div class="t" style="left:611px;top:987px">Джойстик</div></body></html>
